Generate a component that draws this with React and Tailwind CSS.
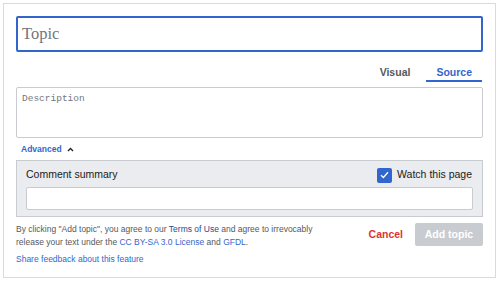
export default function App() {
  const sans = "font-['Liberation_Sans',Arial,sans-serif]";

  return (
    <div className={`w-[500px] h-[283px] bg-white overflow-hidden ${sans}`}>
      <div className="ml-[3px] mt-[3px] w-[493px] h-[275px] border border-[#d8dadd] px-[12px] pt-[12px]">
        {/* topic */}
        <div className="h-[36px] border-2 border-[#36c] rounded-[2px] pl-[4px] flex items-center">
          <span className="font-['Liberation_Serif',Georgia,serif] text-[16.5px] text-[#72777d]">Topic</span>
        </div>

        {/* tabs */}
        <div className="mt-[10px] h-[20px] flex justify-end pr-[1px] gap-[6px]">
          <div className="px-[10px] pt-[3px] text-[10.5px] leading-[14px] font-bold text-[#54595d] border-b-2 border-transparent">
            Visual
          </div>
          <div className="px-[10px] pt-[3px] text-[10.5px] leading-[14px] font-bold text-[#36c] border-b-2 border-[#36c]">
            Source
          </div>
        </div>

        {/* description */}
        <div className="mt-[5px] h-[51px] border border-[#c8ccd1] rounded-[2px] pl-[5px] pt-[5px]">
          <div className="font-['Liberation_Mono',monospace] text-[9.5px] leading-[12px] text-[#72777d]">Description</div>
        </div>

        {/* advanced */}
        <div className="mt-[5px] h-[12px] pl-[5px] flex items-center gap-[5px]">
          <span className="text-[8.5px] font-bold text-[#36c]">Advanced</span>
          <svg width="7" height="5" viewBox="0 0 7 5">
            <path d="M1 4 L3.5 1.5 L6 4" fill="none" stroke="#202122" strokeWidth="1.3" />
          </svg>
        </div>

        {/* options panel */}
        <div className="mt-[5px] h-[57px] border border-[#c8ccd1] bg-[#eaecf0] px-[9px] pt-[6px]">
          <div className="h-[16px] flex items-center justify-between">
            <span className="text-[10.5px] text-[#202122]">Comment summary</span>
            <div className="flex items-center gap-[5px] pr-[1px]">
              <div className="w-[15px] h-[15px] rounded-[2px] bg-[#36c] flex items-center justify-center">
                <svg width="9" height="8" viewBox="0 0 9 8">
                  <path d="M1 4.2 L3.4 6.5 L8 1.3" fill="none" stroke="#fff" strokeWidth="1.3" />
                </svg>
              </div>
              <span className="text-[10.5px] text-[#202122]">Watch this page</span>
            </div>
          </div>
          <div className="mt-[4px] h-[23px] bg-white border border-[#c8ccd1] rounded-[2px]" />
        </div>

        {/* footer */}
        <div className="flex items-start justify-between">
          <div className="mt-[6px] text-[8.5px] leading-[13px] text-[#54595d] whitespace-nowrap">
            By clicking "Add topic", you agree to our <span className="text-[#2a4b8d]">Terms of Use</span> and agree to irrevocably
            <br />
            release your text under the <span className="text-[#36c]">CC BY-SA 3.0 License</span> and <span className="text-[#36c]">GFDL</span>.
          </div>
          <div className="mt-[6px] flex items-center gap-[12px]">
            <span className="text-[10.5px] font-bold text-[#d33]">Cancel</span>
            <div className="w-[68px] h-[23px] rounded-[2px] bg-[#c8ccd1] flex items-center justify-center text-[10.5px] font-bold text-white">
              Add topic
            </div>
          </div>
        </div>
        <div className="mt-[4px] text-[8.5px] leading-[13px] text-[#36c]">Share feedback about this feature</div>
      </div>
    </div>
  );
}
